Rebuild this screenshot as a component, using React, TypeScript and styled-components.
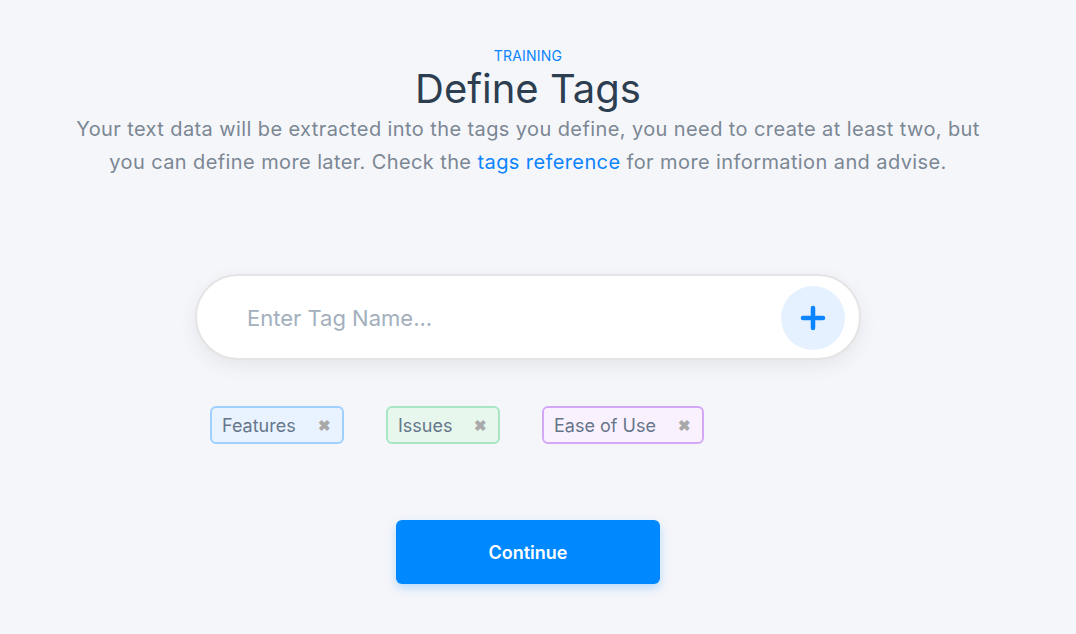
import React from "react";
import styled, { createGlobalStyle } from "styled-components";

const Global = createGlobalStyle`
  html, body { margin: 0; padding: 0; background: #f5f6fa; }
  body { font-family: "Inter", "Noto Sans", sans-serif; }
`;

const Page = styled.div`
  width: 1056px;
  min-height: 634px;
  display: flex;
  flex-direction: column;
  align-items: center;
  padding-top: 47px;
  box-sizing: border-box;
`;

const Eyebrow = styled.div`
  font-size: 14px;
  line-height: 18px;
  color: #0a84ff;
  letter-spacing: 0.2px;
`;

const Title = styled.h1`
  margin: 0;
  font-size: 40px;
  line-height: 48px;
  font-weight: 400;
  color: #2c3e50;
`;

const Lead = styled.p`
  margin: 0;
  width: 960px;
  text-align: center;
  font-size: 20px;
  letter-spacing: 0.4px;
  line-height: 33px;
  color: #7b8794;
`;

const Link = styled.a`
  color: #0a84ff;
  text-decoration: none;
`;

const InputBar = styled.div`
  margin-top: 95px;
  width: 666px;
  height: 86px;
  box-sizing: border-box;
  border: 2px solid #e4e4e4;
  border-radius: 43px;
  background: #fff;
  box-shadow: 0 6px 18px rgba(40, 50, 70, 0.08);
  display: flex;
  align-items: center;
  padding: 2px 14px 0 48px;
`;

const TagInput = styled.input`
  flex: 1;
  border: none;
  outline: none;
  background: transparent;
  font-family: inherit;
  font-size: 22px;
  color: #2c3e50;
  &::placeholder { color: #a3afbd; }
`;

const AddButton = styled.button`
  width: 64px;
  height: 64px;
  border-radius: 50%;
  border: none;
  background: #e5f1ff;
  display: flex;
  align-items: center;
  justify-content: center;
  padding: 0;
  cursor: pointer;
`;

const TagRow = styled.div`
  width: 666px;
  box-sizing: border-box;
  padding-left: 15px;
  margin-top: 46px;
  display: flex;
  gap: 42px;
`;

const Tag = styled.div<{ $border: string; $bg: string; $w: number }>`
  width: ${(p) => p.$w}px;
  height: 38px;
  box-sizing: border-box;
  border: 2px solid ${(p) => p.$border};
  background: ${(p) => p.$bg};
  border-radius: 6px;
  display: flex;
  align-items: center;
  justify-content: space-between;
  padding: 0 11px 0 10px;
  font-size: 18px;
  color: #66768a;
`;

const Remove = styled.span`
  color: #a9a9a9;
  font-size: 15px;
  font-weight: 700;
  line-height: 1;
`;

const Continue = styled.button`
  margin-top: 76px;
  width: 264px;
  height: 64px;
  border: none;
  border-radius: 6px;
  background: #0088ff;
  color: #fff;
  font-family: inherit;
  font-size: 18px;
  font-weight: 600;
  box-shadow: 0 4px 10px rgba(0, 136, 255, 0.25);
  cursor: pointer;
`;

const tags = [
  { label: "Features", border: "#9fd0ff", bg: "#e8f3ff", w: 134 },
  { label: "Issues", border: "#a8e6c4", bg: "#e7f7ee", w: 114 },
  { label: "Ease of Use", border: "#d5a8f7", bg: "#faf1ff", w: 162 },
];

export default function App() {
  return (
    <>
      <Global />
      <Page>
        <Eyebrow>TRAINING</Eyebrow>
        <Title>Define Tags</Title>
        <Lead>
          Your text data will be extracted into the tags you define, you need to create at least two, but
          <br />
          you can define more later. Check the <Link href="#">tags reference</Link> for more information and advise.
        </Lead>
        <InputBar>
          <TagInput placeholder="Enter Tag Name..." />
          <AddButton aria-label="Add tag">
            <svg width="28" height="28" viewBox="0 0 28 28">
              <path d="M14 4v20M4 14h20" stroke="#0a84ff" strokeWidth="4.5" strokeLinecap="round" />
            </svg>
          </AddButton>
        </InputBar>
        <TagRow>
          {tags.map((t) => (
            <Tag key={t.label} $border={t.border} $bg={t.bg} $w={t.w}>
              {t.label}
              <Remove>✖</Remove>
            </Tag>
          ))}
        </TagRow>
        <Continue>Continue</Continue>
      </Page>
    </>
  );
}
